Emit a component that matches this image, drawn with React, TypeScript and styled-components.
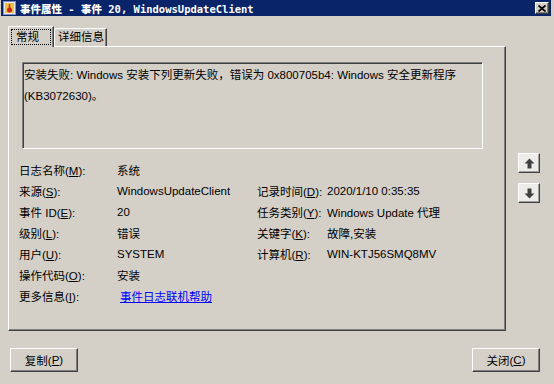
import React from 'react'
import styled, { createGlobalStyle } from 'styled-components'

const GlobalStyle = createGlobalStyle`
  html, body {
    margin: 0;
    padding: 0;
    background: #d4d0c8;
  }
`

const FACE = '#d4d0c8'
const UI_FONT = `"Liberation Sans", "Noto Sans CJK SC", sans-serif`

const Window = styled.div`
  width: 554px;
  height: 384px;
  box-sizing: border-box;
  padding: 0 3px 0 1px;
  background: ${FACE};
  font-family: ${UI_FONT};
  font-size: 11.5px;
  color: #000;
  display: flex;
  flex-direction: column;
  overflow: hidden;
`

const TitleBar = styled.div`
  height: 16px;
  background: #0a246a;
  display: flex;
  align-items: center;
  padding: 0 2px 0 2px;
  gap: 4px;
`

const TitleText = styled.div`
  flex: 1;
  color: #fff;
  font-family: "DejaVu Sans Mono", "Noto Sans CJK SC", monospace;
  font-weight: 900;
  font-size: 10.5px;
  white-space: nowrap;
`

const CloseBtn = styled.div`
  width: 14px;
  height: 12px;
  box-sizing: border-box;
  background: ${FACE};
  border-top: 1px solid #fff;
  border-left: 1px solid #fff;
  border-right: 1px solid #404040;
  border-bottom: 1px solid #404040;
  box-shadow: inset -1px -1px 0 #808080;
  display: flex;
  align-items: center;
  justify-content: center;
`

const Body = styled.div`
  padding: 10px 0 0 7px;
  display: flex;
  flex-direction: column;
`

const MainRow = styled.div`
  display: flex;
`

const TabArea = styled.div`
  width: 498px;
  display: flex;
  flex-direction: column;
`

const TabStrip = styled.div`
  height: 20px;
  display: flex;
  align-items: flex-end;
  position: relative;
  z-index: 1;
`

const Tab = styled.div<{ $active?: boolean }>`
  box-sizing: border-box;
  height: ${p => (p.$active ? 21 : 18)}px;
  margin-bottom: ${p => (p.$active ? -1 : 0)}px;
  padding: ${p => (p.$active ? '2px 2px 0 2px' : '1px 2px 0 3px')};
  background: ${FACE};
  border-top: 1px solid #fff;
  border-left: 1px solid #fff;
  border-right: 1px solid #404040;
  box-shadow: inset -1px 0 0 #808080;
  border-top-left-radius: 2px;
  display: flex;
  align-items: flex-start;
  line-height: 15px;
`

const FocusLabel = styled.span`
  display: inline-block;
  border: 1px dotted #000;
  padding: 0 11px 0 4px;
  line-height: 14px;
`

const Panel = styled.div`
  height: 285px;
  box-sizing: border-box;
  border-top: 1px solid #fff;
  border-left: 1px solid #fff;
  border-right: 1px solid #404040;
  border-bottom: 1px solid #404040;
  box-shadow: inset -1px -1px 0 #808080;
  padding: 15px 0 0 10px;
`

const Description = styled.div`
  width: 461px;
  height: 87px;
  margin-left: 3px;
  box-sizing: border-box;
  border-top: 1px solid #808080;
  border-left: 1px solid #808080;
  border-right: 1px solid #fff;
  border-bottom: 1px solid #fff;
  box-shadow: inset 1px 1px 0 #404040;
  padding: 2px 0 0 1px;
  line-height: 21px;
`

const Fields = styled.div`
  margin-top: 10px;
  display: grid;
  grid-template-columns: 98px 140px 70px auto;
  grid-auto-rows: 21px;
  align-items: center;
  white-space: nowrap;
`

const Link = styled.a`
  color: #0000ff;
  text-decoration: underline;
  margin-left: 3px;
  cursor: pointer;
`

const SideCol = styled.div`
  margin-left: 12px;
  padding-top: 127px;
  display: flex;
  flex-direction: column;
  gap: 10px;
`

const ArrowBtn = styled.div`
  width: 22px;
  height: 20px;
  box-sizing: border-box;
  background: #eeece8;
  border-top: 1px solid #fff;
  border-left: 1px solid #fff;
  border-right: 1px solid #404040;
  border-bottom: 1px solid #404040;
  box-shadow: inset -1px -1px 0 #a0a0a0;
  display: flex;
  align-items: center;
  justify-content: center;
`

const BottomRow = styled.div`
  margin-top: 17px;
  padding: 0 11px 0 2px;
  display: flex;
  justify-content: space-between;
`

const Button = styled.div`
  width: 68px;
  height: 24px;
  box-sizing: border-box;
  background: ${FACE};
  border-top: 1px solid #fff;
  border-left: 1px solid #fff;
  border-right: 1px solid #404040;
  border-bottom: 1px solid #404040;
  box-shadow: inset -1px -1px 0 #808080;
  display: flex;
  align-items: center;
  justify-content: center;
`

const U = styled.span`
  text-decoration: underline;
`

const AppIcon = () => (
  <svg width="13" height="14" viewBox="0 0 13 14">
    <rect x="0.5" y="0.5" width="12" height="13" fill="#e8e8f0" stroke="#8090c0" />
    <rect x="2" y="2" width="9" height="10" fill="#f0c040" />
    <circle cx="6.5" cy="9" r="2.5" fill="#d02020" />
    <rect x="5.8" y="3" width="1.4" height="4" fill="#d02020" />
  </svg>
)

const Arrow = ({ down }: { down?: boolean }) => (
  <svg width="11" height="11" viewBox="0 0 10 10" style={down ? { transform: 'rotate(180deg)' } : undefined}>
    <polygon points="5,0.5 9.5,5 6.8,5 6.8,9.5 3.2,9.5 3.2,5 0.5,5" fill="#404040" />
  </svg>
)

type Pair = [React.ReactNode, React.ReactNode]

const rows: [Pair, Pair | null][] = [
  [[<>日志名称(<U>M</U>):</>, '系统'], null],
  [[<>来源(<U>S</U>):</>, 'WindowsUpdateClient'], [<>记录时间(<U>D</U>):</>, '2020/1/10 0:35:35']],
  [[<>事件 ID(<U>E</U>):</>, '20'], [<>任务类别(<U>Y</U>):</>, 'Windows Update 代理']],
  [[<>级别(<U>L</U>):</>, '错误'], [<>关键字(<U>K</U>):</>, '故障,安装']],
  [[<>用户(<U>U</U>):</>, 'SYSTEM'], [<>计算机(<U>R</U>):</>, 'WIN-KTJ56SMQ8MV']],
  [[<>操作代码(<U>O</U>):</>, '安装'], null],
  [[<>更多信息(<U>I</U>):</>, <Link>事件日志联机帮助</Link>], null],
]

export default function App() {
  return (
    <>
      <GlobalStyle />
      <Window>
        <TitleBar>
          <AppIcon />
          <TitleText>事件属性 - 事件 20, WindowsUpdateClient</TitleText>
          <CloseBtn>
            <svg width="8" height="7" viewBox="0 0 8 7">
              <path d="M0.5 0.5 L7.5 6.5 M7.5 0.5 L0.5 6.5" stroke="#000" strokeWidth="1.8" />
            </svg>
          </CloseBtn>
        </TitleBar>
        <Body>
          <MainRow>
            <TabArea>
              <TabStrip>
                <Tab $active>
                  <FocusLabel>常规</FocusLabel>
                </Tab>
                <Tab>详细信息</Tab>
              </TabStrip>
              <Panel>
                <Description>
                  安装失败: Windows 安装下列更新失败，错误为 0x800705b4: Windows 安全更新程序
                  <br />
                  (KB3072630)。
                </Description>
                <Fields>
                  {rows.map(([a, b], i) => (
                    <React.Fragment key={i}>
                      <span>{a[0]}</span>
                      <span>{a[1]}</span>
                      <span>{b ? b[0] : ''}</span>
                      <span>{b ? b[1] : ''}</span>
                    </React.Fragment>
                  ))}
                </Fields>
              </Panel>
            </TabArea>
            <SideCol>
              <ArrowBtn><Arrow /></ArrowBtn>
              <ArrowBtn><Arrow down /></ArrowBtn>
            </SideCol>
          </MainRow>
          <BottomRow>
            <Button>复制(<U>P</U>)</Button>
            <Button>关闭(<U>C</U>)</Button>
          </BottomRow>
        </Body>
      </Window>
    </>
  )
}
